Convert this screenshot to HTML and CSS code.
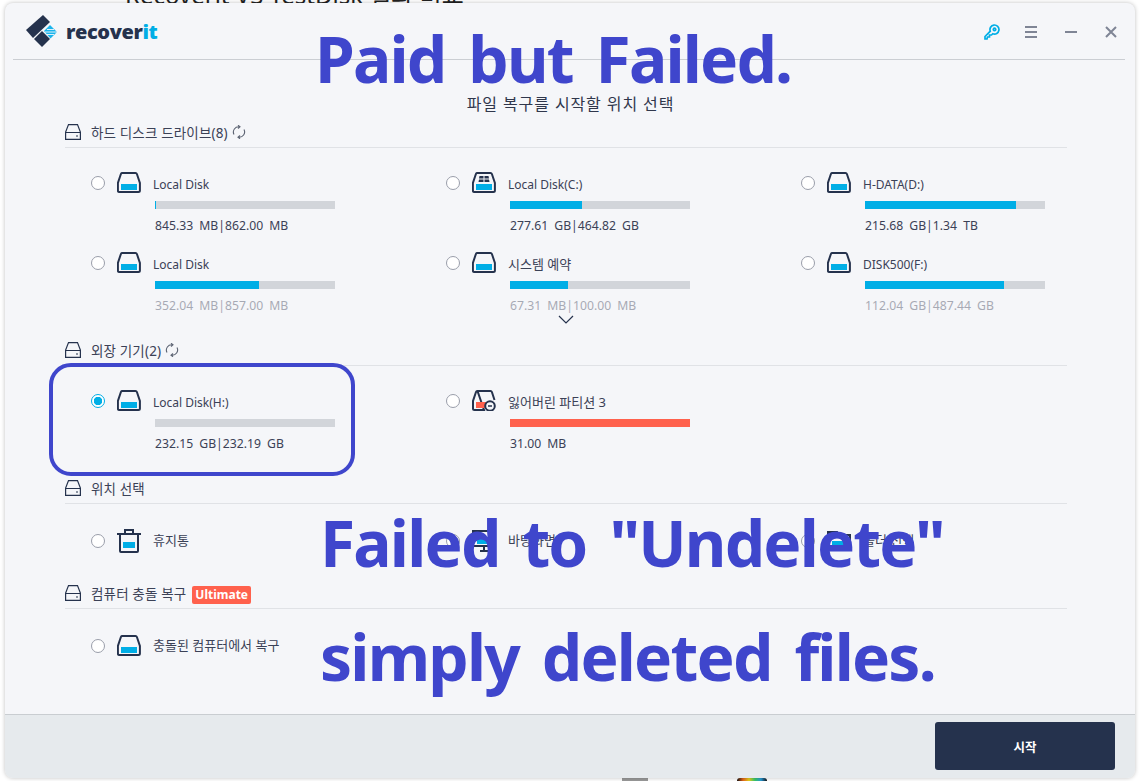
FILE: index.html
```html
<!DOCTYPE html>
<html lang="ko">
<head>
  <meta charset="UTF-8" />
  <title>recoverit</title>
  <link rel="stylesheet" href="styles.css">
</head>
<body>
  <svg class="defs" width="0" height="0">
    <symbol id="disk" viewBox="0 0 24 21">
      <path d="M5.500 1h13a1.500 1.500 0 0 1 1.400 1l3 9v7.500a1.500 1.500 0 0 1-1.500 1.500h-19a1.500 1.500 0 0 1-1.500-1.500V11l3-9a1.500 1.500 0 0 1 1.600-1z" fill="none" stroke="#25324d" stroke-width="2"/>
      <rect x="4" y="12" width="16" height="6" fill="#00aee6"/>
    </symbol>
    <symbol id="head" viewBox="0 0 16 16">
      <path d="M3.500.6h9l2.900 7.400v7.400H.6V8zM.6 8.500h14.800M11 12h2" fill="none" stroke="#25324d" stroke-width="1.200"/>
    </symbol>
    <symbol id="sync" viewBox="0 0 14 14">
      <path d="M2 9.500A5.300 5.300 0 0 1 7.500 1.800M12 4.500A5.300 5.300 0 0 1 6.500 12.200M6 .2l2 1.600-2 1.700M8 10.500l-2 1.700 2 1.600" fill="none" stroke="#5d6473" stroke-width="1.100"/>
    </symbol>
  </svg>

  <div class="backdrop-text">Recoverit VS TestDisk 결과 비교</div>
  <div class="backdrop-bit grey"></div>
  <div class="backdrop-bit rainbow"></div>

  <div class="window">
    <header class="topbar">
      <div class="logo">
        <svg width="32" height="32" viewBox="0 0 32 32">
          <path d="M0 15 17 0l7 7L7 23z" fill="#25324d"/>
          <path d="M8 24l8-8 8 8-8 8z" fill="#25324d"/>
          <path d="M18 16l6-6 7 7-6.500 6.500z" fill="#1ab4ec"/>
          <path d="M21 14.500h7M19 17h12M21 19.500h7" stroke="#f5f6f9" stroke-width="0.900"/>
        </svg>
        <span class="logo-name">recover<span class="logo-it">it</span></span>
      </div>
      <div class="controls">
        <svg class="ctl-key" width="16" height="16" viewBox="0 0 16 16">
          <path d="M1 15v-2.500L6.300 7.200a4.500 4.500 0 1 1 2.500 2.500L7.500 11H5.500v2H3.500l-.5 2zM10.500 4.200a1.200 1.200 0 1 0 .01 0" fill="none" stroke="#00aee6" stroke-width="1.700"/>
        </svg>
        <svg class="ctl" width="14" height="14" viewBox="0 0 14 14">
          <path d="M1 2h12M1 7h12M1 12h12" stroke="#7f8595" stroke-width="2"/>
        </svg>
        <svg class="ctl" width="14" height="14" viewBox="0 0 14 14">
          <path d="M1 7h12" stroke="#7f8595" stroke-width="2"/>
        </svg>
        <svg class="ctl" width="14" height="14" viewBox="0 0 14 14">
          <path d="M2 2l10 10M12 2 2 12" stroke="#7f8595" stroke-width="2"/>
        </svg>
      </div>
    </header>

    <main class="content">
      <p class="subtitle">파일 복구를 시작할 위치 선택</p>

      <section class="group">
        <h2 class="group-head"><svg class="head-icon"><use href="#head"/></svg>하드 디스크 드라이브(8)<svg class="sync"><use href="#sync"/></svg></h2>
        <div class="drives">
          <div class="drive">
            <div class="drive-top"><span class="radio"></span><svg class="disk"><use href="#disk"/></svg><span class="drive-name">Local Disk</span></div>
            <div class="bar"><div class="bar-fill" style="width:1px"></div></div>
            <div class="stats">845.33 MB|862.00 MB</div>
          </div>
          <div class="drive">
            <div class="drive-top"><span class="radio"></span>
              <svg class="disk" viewBox="0 0 24 21">
                <use href="#disk" width="24" height="21"/>
                <path d="M7.500 4h4v2.500H7zM12.500 4h4l.5 2.500h-4.500zM7 7.500h4.500V10H6.500zM12.500 7.500H17l.5 2.500h-5z" fill="#25324d"/>
              </svg>
              <span class="drive-name">Local Disk(C:)</span></div>
            <div class="bar"><div class="bar-fill" style="width:40%"></div></div>
            <div class="stats">277.61 GB|464.82 GB</div>
          </div>
          <div class="drive">
            <div class="drive-top"><span class="radio"></span><svg class="disk"><use href="#disk"/></svg><span class="drive-name">H-DATA(D:)</span></div>
            <div class="bar"><div class="bar-fill" style="width:84%"></div></div>
            <div class="stats">215.68 GB|1.34 TB</div>
          </div>
          <div class="drive">
            <div class="drive-top"><span class="radio"></span><svg class="disk"><use href="#disk"/></svg><span class="drive-name">Local Disk</span></div>
            <div class="bar"><div class="bar-fill" style="width:58%"></div></div>
            <div class="stats faded">352.04 MB|857.00 MB</div>
          </div>
          <div class="drive">
            <div class="drive-top"><span class="radio"></span><svg class="disk"><use href="#disk"/></svg><span class="drive-name ko">시스템 예약</span></div>
            <div class="bar"><div class="bar-fill" style="width:32%"></div></div>
            <div class="stats faded">67.31 MB|100.00 MB</div>
            <svg class="more" width="16" height="9" viewBox="0 0 16 9"><path d="M1 1l7 7 7-7" fill="none" stroke="#25324d" stroke-width="1.200"/></svg>
          </div>
          <div class="drive">
            <div class="drive-top"><span class="radio"></span><svg class="disk"><use href="#disk"/></svg><span class="drive-name">DISK500(F:)</span></div>
            <div class="bar"><div class="bar-fill" style="width:77%"></div></div>
            <div class="stats faded">112.04 GB|487.44 GB</div>
          </div>
        </div>
      </section>

      <section class="group">
        <h2 class="group-head"><svg class="head-icon"><use href="#head"/></svg>외장 기기(2)<svg class="sync"><use href="#sync"/></svg></h2>
        <div class="drives">
          <div class="drive">
            <div class="drive-top"><span class="radio checked"></span><svg class="disk"><use href="#disk"/></svg><span class="drive-name">Local Disk(H:)</span></div>
            <div class="bar"></div>
            <div class="stats">232.15 GB|232.19 GB</div>
          </div>
          <div class="drive">
            <div class="drive-top"><span class="radio"></span>
              <svg class="disk" viewBox="0 0 24 21">
                <path d="M5.500 1h13a1.500 1.500 0 0 1 1.400 1l2.600 8M12 20H2.500A1.500 1.500 0 0 1 1 18.500V11l3-9a1.500 1.500 0 0 1 1.500-1z" fill="none" stroke="#25324d" stroke-width="2"/>
                <rect x="4" y="12" width="11" height="6" fill="#ff614d"/>
                <circle cx="18" cy="16" r="4.800" fill="#f5f6f9" stroke="#25324d" stroke-width="2"/>
                <path d="M16 16h4" stroke="#25324d" stroke-width="1.500"/>
              </svg>
              <span class="drive-name ko">잃어버린 파티션 3</span></div>
            <div class="bar"><div class="bar-fill lost" style="width:100%"></div></div>
            <div class="stats">31.00 MB</div>
          </div>
        </div>
      </section>

      <section class="group">
        <h2 class="group-head"><svg class="head-icon"><use href="#head"/></svg>위치 선택</h2>
        <div class="drives">
          <div class="drive short">
            <div class="drive-top"><span class="radio"></span>
              <svg class="disk tall" viewBox="0 0 24 24">
                <path d="M0 5h24M8 5V1h8v4M3 5v17a1 1 0 0 0 1 1h16a1 1 0 0 0 1-1V5" fill="none" stroke="#25324d" stroke-width="2"/>
                <rect x="6" y="13" width="12" height="6" fill="#00aee6"/>
              </svg>
              <span class="drive-name ko">휴지통</span></div>
          </div>
          <div class="drive short">
            <div class="drive-top"><span class="radio"></span>
              <svg class="disk tall" viewBox="0 0 24 24">
                <path d="M1 2h22v15H1zM8 22h8M12 17v5" fill="none" stroke="#25324d" stroke-width="2"/>
                <rect x="5" y="9" width="14" height="6" fill="#00aee6"/>
              </svg>
              <span class="drive-name ko">바탕화면</span></div>
          </div>
          <div class="drive short">
            <div class="drive-top"><span class="radio"></span>
              <svg class="disk tall" viewBox="0 0 24 24">
                <path d="M1 3h9l2 3h11v15H1z" fill="none" stroke="#25324d" stroke-width="2"/>
                <rect x="5" y="12" width="14" height="6" fill="#00aee6"/>
              </svg>
              <span class="drive-name ko">폴더 선택</span></div>
          </div>
        </div>
      </section>

      <section class="group">
        <h2 class="group-head"><svg class="head-icon"><use href="#head"/></svg>컴퓨터 충돌 복구<span class="badge">Ultimate</span></h2>
        <div class="drives">
          <div class="drive short">
            <div class="drive-top"><span class="radio"></span><svg class="disk"><use href="#disk"/></svg><span class="drive-name ko">충돌된 컴퓨터에서 복구</span></div>
          </div>
        </div>
      </section>
    </main>

    <footer class="footer">
      <button class="start-btn">시작</button>
    </footer>
  </div>

  <!-- annotations painted over the screenshot -->
  <div class="callout-box"></div>
  <div class="note note-paid">Paid but Failed.</div>
  <div class="note note-undelete">Failed to "Undelete"</div>
  <div class="note note-files">simply deleted files.</div>
</body>
</html>
```

FILE: styles.css
```css
* {
  box-sizing: border-box;
}

html, body {
  height: 100%;
}

body {
  margin: 0;
  background: #fff;
  font-family: "Noto Sans", "Noto Sans CJK KR", sans-serif;
  color: #3b4156;
  overflow: hidden;
  position: relative;
}

.defs {
  position: absolute;
}

.backdrop-text {
  position: absolute;
  left: 125px;
  top: -18px;
  font-size: 24px;
  line-height: 26px;
  color: #222;
  white-space: nowrap;
}

.backdrop-bit {
  position: absolute;
  top: 778px;
  height: 3px;
}

.backdrop-bit.grey {
  left: 622px;
  width: 26px;
  background: #999;
}

.backdrop-bit.rainbow {
  left: 737px;
  width: 30px;
  background: linear-gradient(90deg, #111, #e8661a, #e8d01a, #35c96a, #2a9ad8, #111);
  border-radius: 10px 10px 0 0;
}

.window {
  position: relative;
  width: 1130px;
  height: 775px;
  margin: 3px 0 0 5px;
  background: #f5f6f9;
  border-radius: 8px;
  box-shadow: 0 0 4px rgba(0, 0, 0, 0.25);
  display: flex;
  flex-direction: column;
  overflow: hidden;
}

.topbar {
  height: 57px;
  margin: 0 10px 0 8px;
  padding: 0 5px 0 13px;
  border-bottom: 1px solid #cbced3;
  display: flex;
  align-items: center;
  justify-content: space-between;
  flex: none;
}

.logo {
  display: flex;
  align-items: center;
  gap: 8px;
}

.logo-name {
  font-size: 20px;
  font-weight: 800;
  letter-spacing: -0.4px;
  color: #25324d;
  font-family: "Open Sans", sans-serif;
}

.logo-it {
  color: #00aee6;
}

.controls {
  display: flex;
  align-items: center;
  gap: 26px;
  padding-right: 2px;
  margin-top: 2px;
}

.ctl-key {
  margin-right: -2px;
  margin-top: -1px;
}

.content {
  flex: 1;
  padding: 0 68px 0 60px;
}

.subtitle {
  margin: 0;
  padding: 34px 0 0 9px;
  height: 58px;
  font-size: 16px;
  letter-spacing: 0.9px;
  line-height: 20px;
  text-align: center;
  color: #30374c;
}

.group-head {
  height: 30px;
  margin: 0;
  border-bottom: 1px solid #e0e2e6;
  display: flex;
  align-items: center;
  font-size: 13.5px;
  letter-spacing: 0.15px;
  font-weight: 400;
  color: #3b4156;
  padding-bottom: 1px;
}

.head-icon {
  width: 16px;
  height: 16px;
  margin-right: 10px;
}

.sync {
  width: 14px;
  height: 14px;
  margin-left: 4px;
}

.badge {
  margin: 3px 0 0 6px;
  padding: 0 3px;
  height: 18px;
  line-height: 18px;
  background: #ff614d;
  color: #fff;
  border-radius: 2px;
  font-size: 12px;
  letter-spacing: 0;
  font-weight: 700;
}

.drives {
  display: grid;
  grid-template-columns: repeat(3, 355px);
  padding-top: 26px;
  margin-bottom: 2px;
}

.drive {
  position: relative;
  height: 80px;
  padding-left: 26px;
}

.drive.short {
  height: 47px;
}

.drive-top {
  height: 20px;
  display: flex;
  align-items: center;
}

.radio {
  width: 14px;
  height: 14px;
  border-radius: 50%;
  border: 1px solid #9a9eaa;
  background: #fff;
  margin-right: 12px;
  margin-top: -3px;
  flex: none;
}

.short .radio {
  margin-top: 1px;
}

.radio.checked {
  border-color: #00aee6;
  background: radial-gradient(circle, #00aee6 0 4px, #fff 4.5px);
}

.disk {
  width: 24px;
  height: 21px;
  margin-right: 12px;
  margin-top: -4px;
  flex: none;
}

.short .disk {
  margin-top: 1px;
}

.disk.tall {
  height: 24px;
}

.drive-name {
  font-size: 12px;
  color: #3b4156;
}

.drive-name.ko {
  font-size: 13px;
  margin-bottom: 2px;
}

.bar {
  margin: 7px 0 0 64px;
  width: 180px;
  height: 8px;
  background: #d2d5da;
}

.bar-fill {
  height: 100%;
  background: #00aee6;
}

.bar-fill.lost {
  background: #ff614d;
}

.stats {
  margin: 7px 0 0 64px;
  font-size: 12.2px;
  line-height: 20px;
  word-spacing: 3px;
  color: #3b4156;
}

.stats.faded {
  opacity: 0.42;
}

.more {
  position: absolute;
  left: 112px;
  top: 61px;
}

.drive:nth-child(5) .more {
  left: 138px;
}

.footer {
  height: 64px;
  flex: none;
  background: #e6eaed;
  border-top: 1px solid #c9cdd1;
  display: flex;
  justify-content: flex-end;
  align-items: flex-start;
  padding: 7px 20px 0 0;
}

.start-btn {
  width: 180px;
  height: 48px;
  border: none;
  border-radius: 3px;
  background: #25324d;
  color: #fff;
  font-family: inherit;
  font-size: 12.5px;
  font-weight: 700;
}

.callout-box {
  position: absolute;
  left: 49px;
  top: 363px;
  width: 306px;
  height: 113px;
  border: 4px solid #3f46cc;
  border-radius: 22px;
}

.note {
  position: absolute;
  font-family: "Noto Sans", sans-serif;
  font-weight: 700;
  font-size: 64px;
  letter-spacing: -1.8px;
  line-height: 80px;
  color: #3f46cc;
  white-space: nowrap;
  word-spacing: 8px;
}

.note-paid {
  left: 315px;
  top: 19px;
}

.note-undelete {
  left: 320px;
  top: 503px;
}

.note-files {
  left: 320px;
  top: 617px;
}
```
